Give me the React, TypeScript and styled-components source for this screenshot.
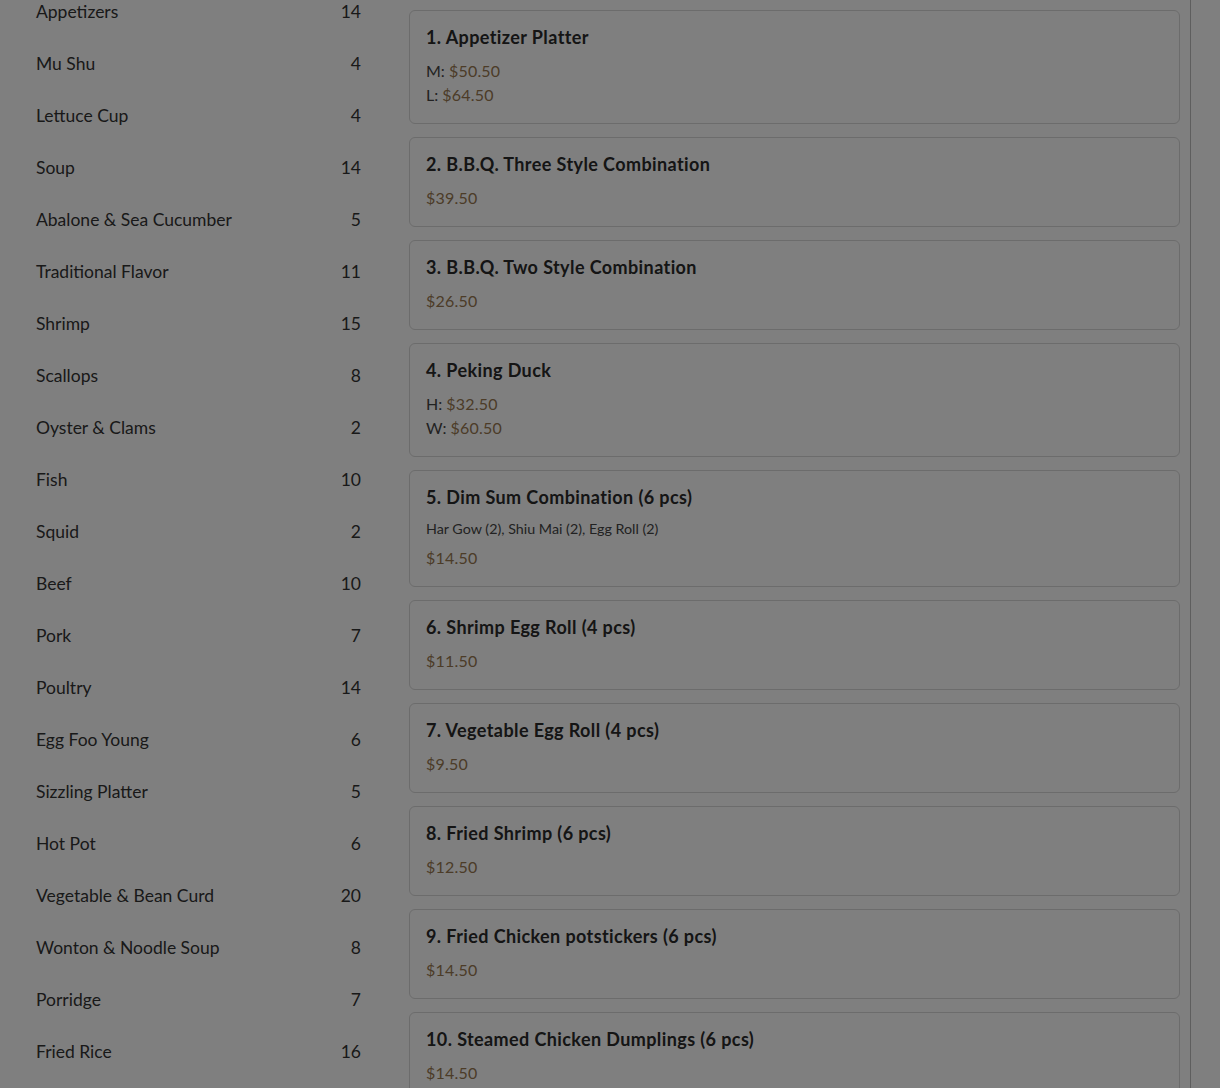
import React from 'react';
import styled, { createGlobalStyle } from 'styled-components';

const GlobalStyle = createGlobalStyle`
  html, body {
    margin: 0;
    padding: 0;
    background: #ffffff;
    overflow: hidden;
  }
  body {
    font-family: Lato, "Noto Sans", sans-serif;
    color: #333333;
  }
`;

const Page = styled.div`
  display: flex;
  align-items: stretch;
  height: 1088px;
  overflow: hidden;
`;

const Sidebar = styled.nav`
  width: 357px;
  padding-left: 20px;
  flex-shrink: 0;
`;

const CategoryList = styled.ul`
  list-style: none;
  margin: -15px 0 0;
  padding: 0;
`;

const CategoryRow = styled.li`
  display: flex;
  justify-content: space-between;
  align-items: center;
  height: 52px;
  padding: 0 16px;
  font-size: 17.5px;
  color: #333333;
`;

const Count = styled.span`
  font-variant-numeric: tabular-nums;
`;

const Main = styled.main`
  width: 771px;
  margin-left: 32px;
  padding: 10px 10px 0 0;
  border-right: 1px solid #bdbdbd;
  flex-shrink: 0;
`;

const CardList = styled.div`
  display: flex;
  flex-direction: column;
  gap: 13px;
`;

const Card = styled.div`
  flex-shrink: 0;
  border: 1px solid #d8d8d8;
  border-radius: 6px;
  padding: 14px 16px 16px;
  background: #ffffff;
`;

const Title = styled.div`
  font-size: 18px;
  font-weight: 700;
  letter-spacing: 0.4px;
  line-height: 24px;
  color: #2a2a2a;
  margin-bottom: 10px;
`;

const Description = styled.div`
  font-size: 14.3px;
  line-height: 19px;
  color: #444444;
  margin-bottom: 8px;
`;

const PriceLine = styled.div`
  font-size: 16px;
  line-height: 24px;
  color: #444444;
`;

const Price = styled.span`
  color: #987850;
  letter-spacing: 0.2px;
`;

const Overlay = styled.div`
  position: fixed;
  inset: 0;
  background: rgba(0, 0, 0, 0.5);
`;

const categories: [string, number][] = [
  ['Appetizers', 14],
  ['Mu Shu', 4],
  ['Lettuce Cup', 4],
  ['Soup', 14],
  ['Abalone & Sea Cucumber', 5],
  ['Traditional Flavor', 11],
  ['Shrimp', 15],
  ['Scallops', 8],
  ['Oyster & Clams', 2],
  ['Fish', 10],
  ['Squid', 2],
  ['Beef', 10],
  ['Pork', 7],
  ['Poultry', 14],
  ['Egg Foo Young', 6],
  ['Sizzling Platter', 5],
  ['Hot Pot', 6],
  ['Vegetable & Bean Curd', 20],
  ['Wonton & Noodle Soup', 8],
  ['Porridge', 7],
  ['Fried Rice', 16],
];

type Item = {
  name: string;
  desc?: string;
  prices: { label?: string; value: string }[];
};

const items: Item[] = [
  { name: '1. Appetizer Platter', prices: [{ label: 'M', value: '$50.50' }, { label: 'L', value: '$64.50' }] },
  { name: '2. B.B.Q. Three Style Combination', prices: [{ value: '$39.50' }] },
  { name: '3. B.B.Q. Two Style Combination', prices: [{ value: '$26.50' }] },
  { name: '4. Peking Duck', prices: [{ label: 'H', value: '$32.50' }, { label: 'W', value: '$60.50' }] },
  {
    name: '5. Dim Sum Combination (6 pcs)',
    desc: 'Har Gow (2), Shiu Mai (2), Egg Roll (2)',
    prices: [{ value: '$14.50' }],
  },
  { name: '6. Shrimp Egg Roll (4 pcs)', prices: [{ value: '$11.50' }] },
  { name: '7. Vegetable Egg Roll (4 pcs)', prices: [{ value: '$9.50' }] },
  { name: '8. Fried Shrimp (6 pcs)', prices: [{ value: '$12.50' }] },
  { name: '9. Fried Chicken potstickers (6 pcs)', prices: [{ value: '$14.50' }] },
  { name: '10. Steamed Chicken Dumplings (6 pcs)', prices: [{ value: '$14.50' }] },
];

const App: React.FC = () => {
  return (
    <>
      <GlobalStyle />
      <Page>
        <Sidebar>
          <CategoryList>
            {categories.map(([name, count]) => (
              <CategoryRow key={name}>
                <span>{name}</span>
                <Count>{count}</Count>
              </CategoryRow>
            ))}
          </CategoryList>
        </Sidebar>
        <Main>
          <CardList>
            {items.map((item) => (
              <Card key={item.name}>
                <Title>{item.name}</Title>
                {item.desc && <Description>{item.desc}</Description>}
                {item.prices.map((p) => (
                  <PriceLine key={p.value + (p.label || '')}>
                    {p.label && `${p.label}: `}
                    <Price>{p.value}</Price>
                  </PriceLine>
                ))}
              </Card>
            ))}
          </CardList>
        </Main>
      </Page>
      <Overlay />
    </>
  );
};

export default App;
